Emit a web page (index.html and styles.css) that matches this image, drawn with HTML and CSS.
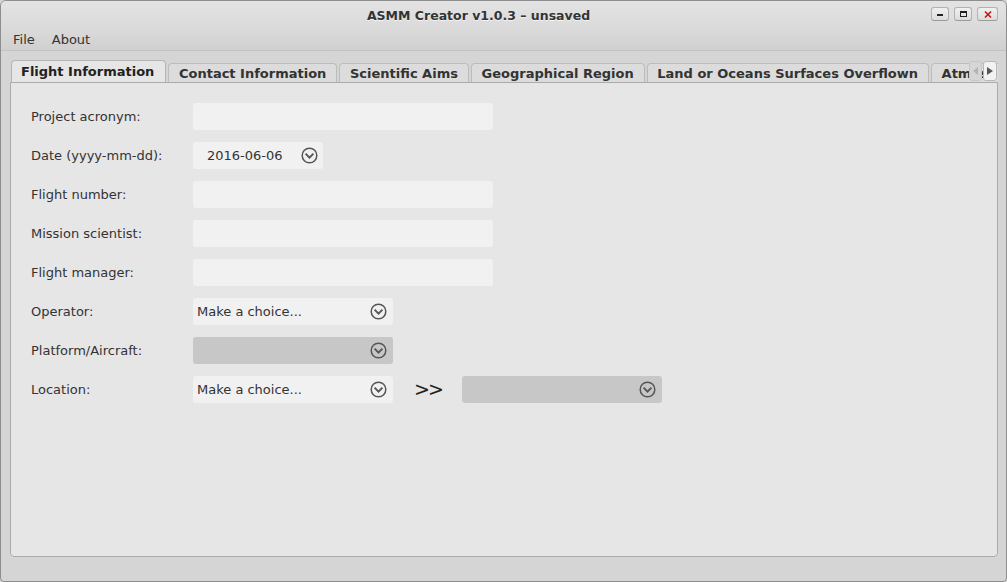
FILE: index.html
```html
<!DOCTYPE html>
<html>
<head>
<meta charset="utf-8">
<link rel="stylesheet" href="styles.css">
</head>
<body>
<div class="window">
  <div class="titlebar">
    <div class="spacer"></div>
    <div class="title">ASMM Creator v1.0.3 – unsaved</div>
    <div class="winbtns">
      <span class="wbtn"><svg width="10" height="8" viewBox="0 0 10 8"><rect x="2" y="4" width="6" height="2" fill="#222"/></svg></span>
      <span class="wbtn"><svg width="10" height="8" viewBox="0 0 10 8"><rect x="2.5" y="1.5" width="6" height="5" fill="none" stroke="#222" stroke-width="1"/><rect x="2" y="1" width="7" height="2" fill="#222"/></svg></span>
      <span class="wbtn wide"><svg width="10" height="9" viewBox="0 0 10 9"><path d="M2 1.5 L8 7.5 M8 1.5 L2 7.5" stroke="#d01010" stroke-width="1.6"/></svg></span>
    </div>
  </div>
  <div class="menubar">
    <span class="menu">File</span>
    <span class="menu">About</span>
  </div>
  <div class="body">
    <div class="tabstrip">
      <div class="tabs">
        <div class="tab active">Flight Information</div>
        <div class="tab">Contact Information</div>
        <div class="tab">Scientific Aims</div>
        <div class="tab">Geographical Region</div>
        <div class="tab">Land or Oceans Surfaces Overflown</div>
        <div class="tab">Atmospheric Features</div>
      </div>
      <div class="scrollbtns">
        <span class="sbtn disabled"><svg width="6" height="8" viewBox="0 0 6 8"><path d="M5 0 L0 4 L5 8 Z" fill="#b4b4b4"/></svg></span>
        <span class="sbtn"><svg width="6" height="8" viewBox="0 0 6 8"><path d="M0 0 L6 4 L0 8 Z" fill="#555"/></svg></span>
      </div>
    </div>
    <div class="panel">
      <div class="form">
        <label class="lbl">Project acronym:</label>
        <div class="field"><div class="input"></div></div>

        <label class="lbl">Date (yyyy-mm-dd):</label>
        <div class="field"><div class="date"><span class="dtext">2016-06-06</span><svg class="chev" width="17" height="17" viewBox="0 0 17 17"><circle cx="8.5" cy="8.5" r="7.3" fill="none" stroke="#555" stroke-width="1.5"/><path d="M4.6 6.6 L8.5 10.6 L12.4 6.6" fill="none" stroke="#555" stroke-width="1.9"/></svg></div></div>

        <label class="lbl">Flight number:</label>
        <div class="field"><div class="input"></div></div>

        <label class="lbl">Mission scientist:</label>
        <div class="field"><div class="input"></div></div>

        <label class="lbl">Flight manager:</label>
        <div class="field"><div class="input"></div></div>

        <label class="lbl">Operator:</label>
        <div class="field"><div class="combo"><span class="ctext">Make a choice...</span><svg class="chev" width="17" height="17" viewBox="0 0 17 17"><circle cx="8.5" cy="8.5" r="7.3" fill="none" stroke="#555" stroke-width="1.5"/><path d="M4.6 6.6 L8.5 10.6 L12.4 6.6" fill="none" stroke="#555" stroke-width="1.9"/></svg></div></div>

        <label class="lbl">Platform/Aircraft:</label>
        <div class="field"><div class="combo disabled"><span class="ctext"></span><svg class="chev" width="17" height="17" viewBox="0 0 17 17"><circle cx="8.5" cy="8.5" r="7.3" fill="none" stroke="#555" stroke-width="1.5"/><path d="M4.6 6.6 L8.5 10.6 L12.4 6.6" fill="none" stroke="#555" stroke-width="1.9"/></svg></div></div>

        <label class="lbl">Location:</label>
        <div class="field">
          <div class="combo"><span class="ctext">Make a choice...</span><svg class="chev" width="17" height="17" viewBox="0 0 17 17"><circle cx="8.5" cy="8.5" r="7.3" fill="none" stroke="#555" stroke-width="1.5"/><path d="M4.6 6.6 L8.5 10.6 L12.4 6.6" fill="none" stroke="#555" stroke-width="1.9"/></svg></div>
          <span class="arrows">&gt;&gt;</span>
          <div class="combo disabled"><span class="ctext"></span><svg class="chev" width="17" height="17" viewBox="0 0 17 17"><circle cx="8.5" cy="8.5" r="7.3" fill="none" stroke="#555" stroke-width="1.5"/><path d="M4.6 6.6 L8.5 10.6 L12.4 6.6" fill="none" stroke="#555" stroke-width="1.9"/></svg></div>
        </div>
      </div>
    </div>
  </div>
</div>
</body>
</html>
```

FILE: styles.css
```css
* { box-sizing: border-box; }
html, body { margin: 0; padding: 0; }
body {
  width: 1007px;
  height: 582px;
  overflow: hidden;
  font-family: "DejaVu Sans", sans-serif;
  font-size: 13px;
  color: #2f2f2f;
  background: #d4d4d4;
}
.window {
  width: 1007px;
  height: 582px;
  border: 1px solid #8e8e8e;
  border-radius: 6px 6px 4px 4px;
  background: #d5d5d5;
  display: flex;
  flex-direction: column;
  overflow: hidden;
}
.titlebar {
  height: 28px;
  display: grid;
  grid-template-columns: 1fr auto 1fr;
  align-items: center;
  background: linear-gradient(#e3e3e3, #dadada);
}
.title {
  font-weight: bold;
  font-size: 12.5px;
  color: #333;
  text-shadow: 0 1px 0 #f4f4f4;
  margin-top: 1px;
  position: relative;
  left: -25px;
}
.winbtns {
  display: flex;
  justify-content: flex-end;
  gap: 5px;
  padding-right: 8px;
  margin-top: -2px;
}
.wbtn {
  width: 18px;
  height: 14px;
  display: flex;
  align-items: center;
  justify-content: center;
  border: 1px solid #b2b2b2;
  border-bottom-color: #9a9a9a;
  border-radius: 3px;
  background: linear-gradient(#f0f0f0, #dcdcdc);
}
.wbtn.wide { width: 21px; }
.menubar {
  height: 22px;
  display: flex;
  align-items: center;
  padding-left: 12px;
  background: linear-gradient(#dadada, #d0d0d0);
  border-bottom: 1px solid #c3c3c3;
  color: #333;
}
.menu { margin-right: 17px; padding-bottom: 1px; }
.body {
  flex: 1;
  display: flex;
  flex-direction: column;
  padding: 9px 8px 24px 9px;
}
.tabstrip {
  position: relative;
  height: 22px;
}
.tabs {
  display: flex;
  align-items: flex-end;
  gap: 2px;
  height: 22px;
  padding-left: 1px;
  overflow: hidden;
  white-space: nowrap;
}
.tab {
  flex: none;
  height: 19px;
  padding: 1px 10px 0 9.6px;
  font-weight: bold;
  color: #333;
  display: flex;
  align-items: center;
  background: #dcdcdc;
  border: 1px solid #bcbcbc;
  border-bottom: none;
  border-radius: 4px 4px 0 0;
}
.tab.active {
  height: 23px;
  padding: 0 11px 2px 9px;
  background: #e6e6e6;
  border-color: #b4b4b4;
  color: #222;
  position: relative;
  z-index: 1;
  margin-bottom: -1px;
}
.scrollbtns {
  position: absolute;
  right: 1px;
  top: 1px;
  display: flex;
  gap: 1px;
}
.sbtn {
  width: 14px;
  height: 20px;
  display: flex;
  align-items: center;
  justify-content: center;
  background: #f2f2f2;
  border: 1px solid #b8b8b8;
  border-radius: 3px;
}
.sbtn.disabled {
  width: 13px;
  background: #d6d6d6;
  border-color: #c6c6c6;
}
.panel {
  flex: 1;
  background: #e6e6e6;
  border: 1px solid #ababab;
  border-radius: 0 0 4px 4px;
  padding: 20px 20px;
}
.form {
  display: grid;
  grid-template-columns: 162px auto;
  row-gap: 12px;
  align-items: center;
}
.lbl {
  color: #333;
  padding-bottom: 1px;
}
.field {
  display: flex;
  align-items: center;
  height: 27px;
}
.input {
  width: 300px;
  height: 27px;
  background: #f1f1f1;
  border-radius: 3px;
}
.date, .combo {
  height: 27px;
  border-radius: 3px;
  background: #f1f1f1;
  display: flex;
  align-items: center;
  justify-content: space-between;
}
.date {
  width: 130px;
  padding: 0 5px 0 14px;
}
.combo {
  width: 200px;
  padding: 0 6px 0 4px;
}
.combo.disabled { background: #c7c7c7; }
.dtext, .ctext { color: #333; padding-bottom: 1px; }
.chev { flex: none; }
.arrows {
  font-size: 19px;
  letter-spacing: -2px;
  color: #222;
  margin: 0 22px 0 21px;
  padding-bottom: 2px;
  width: 26px;
}
```
